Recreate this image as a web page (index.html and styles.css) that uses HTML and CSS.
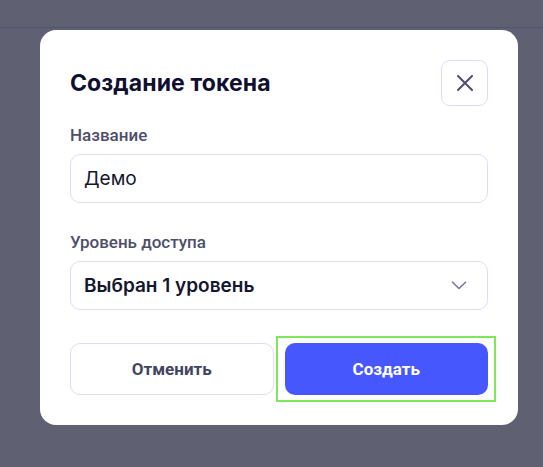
FILE: index.html
```html
<!DOCTYPE html>
<html lang="ru">
<head>
<meta charset="utf-8">
<title>Создание токена</title>
<link rel="stylesheet" href="styles.css">
</head>
<body>
<div class="topbar"></div>
<div class="modal">
  <div class="modal-header">
    <h2 class="modal-title">Создание токена</h2>
    <button class="close-btn" type="button" aria-label="Закрыть">
      <svg width="16" height="16" viewBox="0 0 16 16" fill="none"><path d="M1 1L15 15M15 1L1 15" stroke="#4f4f6e" stroke-width="2" stroke-linecap="round"/></svg>
    </button>
  </div>
  <label class="field-label label-first">Название</label>
  <div class="input">Демо</div>
  <label class="field-label label-second">Уровень доступа</label>
  <div class="select">
    <span class="select-value">Выбран 1 уровень</span>
    <svg width="16" height="9" viewBox="0 0 16 9" fill="none"><path d="M1.5 1.2L8 7.5L14.5 1.2" stroke="#7678a8" stroke-width="1.6" stroke-linecap="round" stroke-linejoin="round"/></svg>
  </div>
  <div class="actions">
    <button class="btn btn-cancel" type="button">Отменить</button>
    <button class="btn btn-create" type="button">Создать</button>
  </div>
</div>
</body>
</html>
```
FILE: styles.css
```css
* { box-sizing: border-box; }
html, body { margin: 0; padding: 0; }
body {
  background: #606073;
  font-family: Roboto, "Liberation Sans", sans-serif;
  width: 543px;
  height: 467px;
  overflow: hidden;
}
.topbar {
  height: 28px;
  border-bottom: 1px solid #4f5470;
}
.modal {
  margin: 2px 0 0 40px;
  width: 478px;
  height: 395px;
  padding: 30px;
  background: #ffffff;
  border-radius: 16px;
  display: flex;
  flex-direction: column;
}
.modal-header {
  display: flex;
  align-items: center;
  justify-content: space-between;
  height: 46px;
}
.modal-title {
  margin: 0;
  font-family: Inter, Roboto, sans-serif;
  font-size: 23px;
  font-weight: 700;
  color: #0f1030;
  letter-spacing: 0.1px;
}
.close-btn {
  width: 47px;
  height: 46px;
  border: 1px solid #dcdcf7;
  border-radius: 9px;
  background: #fff;
  display: flex;
  align-items: center;
  justify-content: center;
  padding: 0;
}
.field-label {
  display: block;
  font-size: 17px;
  line-height: 22px;
  font-weight: 500;
  color: #4d4f6a;
}
.label-first { margin-top: 18px; }
.label-second { margin-top: 28px; }
.input, .select {
  margin-top: 8px;
  height: 49px;
  border: 1px solid #dcdef8;
  border-radius: 10px;
  padding: 0 20px 0 13px;
  display: flex;
  align-items: center;
  font-family: Inter, Roboto, sans-serif;
  font-size: 19px;
  color: #15162f;
}
.select { justify-content: space-between; }
.select-value { font-weight: 600; }
.actions {
  margin-top: 33px;
  display: grid;
  grid-template-columns: 1fr 1fr;
  gap: 11px;
  height: 52px;
}
.btn {
  font-family: inherit;
  font-size: 17px;
  font-weight: 700;
  border-radius: 10px;
  height: 52px;
}
.btn-cancel {
  background: #fff;
  border: 1px solid #dcdcf5;
  color: #43455f;
}
.btn-create {
  position: relative;
  background: #4657fe;
  border: none;
  color: #ffffff;
}
.btn-create::after {
  content: "";
  position: absolute;
  top: -7px;
  bottom: -7px;
  left: -9px;
  right: -8px;
  border: 2px solid #7fe85a;
  pointer-events: none;
}
```
